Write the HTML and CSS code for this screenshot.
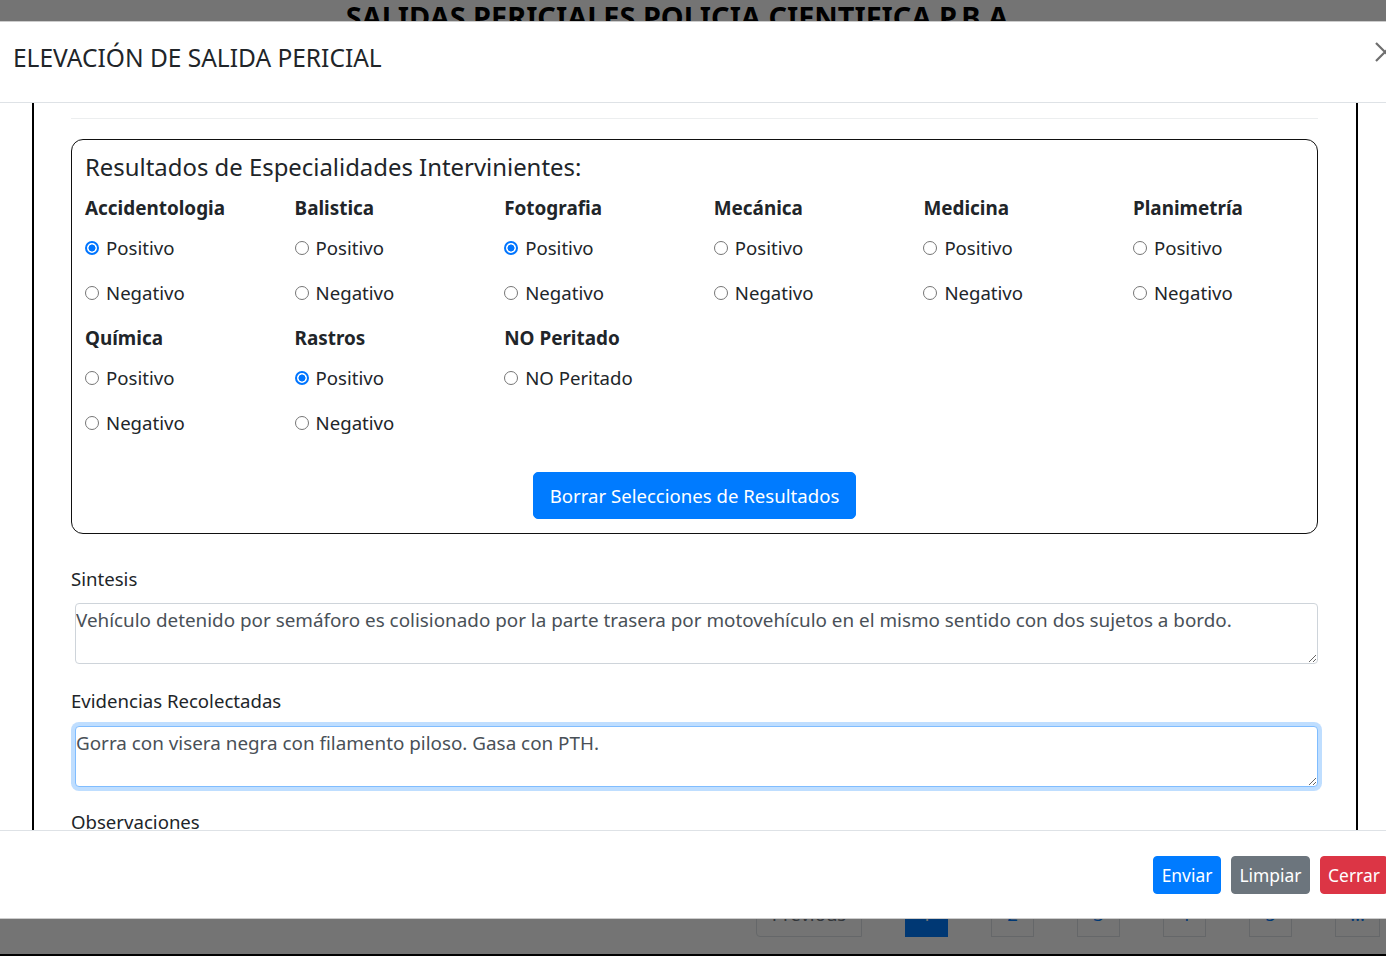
FILE: index.html
```html
<!DOCTYPE html>
<html lang="es">
<head>
<meta charset="utf-8">
<title>Elevación de salida pericial</title>
<link rel="stylesheet" href="styles.css">
</head>
<body>
<div class="page">
  <h1 class="site-title">SALIDAS PERICIALES POLICIA CIENTIFICA P.B.A</h1>
  <div class="page-spacer"></div>
  <nav class="pager">
    <span class="pg pg-prev">Previous</span>
    <span class="pg pg-active">1</span>
    <span class="pg">2</span>
    <span class="pg">3</span>
    <span class="pg">4</span>
    <span class="pg">5</span>
    <span class="pg pg-more">…</span>
  </nav>
  <div class="page-edge"></div>
</div>
<div class="backdrop"></div>
<div class="modal">
  <div class="modal-header">
    <h5 class="modal-title">ELEVACIÓN DE SALIDA PERICIAL</h5>
    <button class="close" type="button" aria-label="Close">
      <svg width="20" height="20" viewBox="0 0 20 20"><path d="M1 1 L19 19 M19 1 L1 19" stroke="#6e6e6e" stroke-width="2.2" fill="none"/></svg>
    </button>
  </div>
  <div class="modal-body">
    <div class="frame">
      <hr class="sep">
      <fieldset class="results">
        <h4 class="results-title">Resultados de Especialidades Intervinientes:</h4>
        <div class="spec-grid">
          <div class="spec">
            <div class="spec-name">Accidentologia</div>
            <label class="opt"><input type="radio" name="acc" checked>Positivo</label>
            <label class="opt"><input type="radio" name="acc">Negativo</label>
          </div>
          <div class="spec">
            <div class="spec-name">Balistica</div>
            <label class="opt"><input type="radio" name="bal">Positivo</label>
            <label class="opt"><input type="radio" name="bal">Negativo</label>
          </div>
          <div class="spec">
            <div class="spec-name">Fotografia</div>
            <label class="opt"><input type="radio" name="fot" checked>Positivo</label>
            <label class="opt"><input type="radio" name="fot">Negativo</label>
          </div>
          <div class="spec">
            <div class="spec-name">Mecánica</div>
            <label class="opt"><input type="radio" name="mec">Positivo</label>
            <label class="opt"><input type="radio" name="mec">Negativo</label>
          </div>
          <div class="spec">
            <div class="spec-name">Medicina</div>
            <label class="opt"><input type="radio" name="med">Positivo</label>
            <label class="opt"><input type="radio" name="med">Negativo</label>
          </div>
          <div class="spec">
            <div class="spec-name">Planimetría</div>
            <label class="opt"><input type="radio" name="pla">Positivo</label>
            <label class="opt"><input type="radio" name="pla">Negativo</label>
          </div>
          <div class="spec">
            <div class="spec-name">Química</div>
            <label class="opt"><input type="radio" name="qui">Positivo</label>
            <label class="opt"><input type="radio" name="qui">Negativo</label>
          </div>
          <div class="spec">
            <div class="spec-name">Rastros</div>
            <label class="opt"><input type="radio" name="ras" checked>Positivo</label>
            <label class="opt"><input type="radio" name="ras">Negativo</label>
          </div>
          <div class="spec">
            <div class="spec-name">NO Peritado</div>
            <label class="opt"><input type="radio" name="nop">NO Peritado</label>
          </div>
        </div>
        <div class="results-actions">
          <button class="btn btn-primary btn-clear" type="button">Borrar Selecciones de Resultados</button>
        </div>
      </fieldset>
      <div class="field field-first">
        <label class="field-label">Sintesis</label>
        <textarea class="field-input">Vehículo detenido por semáforo es colisionado por la parte trasera por motovehículo en el mismo sentido con dos sujetos a bordo.</textarea>
      </div>
      <div class="field">
        <label class="field-label">Evidencias Recolectadas</label>
        <textarea class="field-input is-focused">Gorra con visera negra con filamento piloso. Gasa con PTH.</textarea>
      </div>
      <div class="field">
        <label class="field-label">Observaciones</label>
        <textarea class="field-input"></textarea>
      </div>
    </div>
  </div>
  <div class="modal-footer">
    <button class="fbtn fbtn-primary" type="button">Enviar</button>
    <button class="fbtn fbtn-secondary" type="button">Limpiar</button>
    <button class="fbtn fbtn-danger" type="button">Cerrar</button>
  </div>
</div>
</body>
</html>
```
FILE: styles.css
```css
* { box-sizing: border-box; }
html, body { margin: 0; padding: 0; }
body {
  width: 1386px;
  height: 956px;
  overflow: hidden;
  position: relative;
  background: #fff;
  color: #212529;
  font-family: "Noto Sans", "Open Sans", sans-serif;
  font-size: 18.6px;
}

/* page behind the backdrop */
.page {
  height: 956px;
  display: flex;
  flex-direction: column;
}
.site-title {
  margin: -1px 0 0;
  padding-right: 32px;
  text-align: center;
  font-size: 28.9px;
  line-height: 36px;
  font-weight: 700;
  color: #000;
  font-stretch: 88%;
}
.page-spacer { flex: 1; }
.pager {
  display: flex;
  justify-content: flex-end;
  gap: 43px;
  padding-right: 6px;
  margin-bottom: 17px;
}
.pg {
  height: 47px;
  width: 43px;
  border: 1px solid #dee2e6;
  color: #007bff;
  display: flex;
  align-items: center;
  justify-content: center;
  font-size: 18.6px;
}
.pg-prev { width: 106px; color: #6c757d; border-radius: 4px 0 0 4px; }
.pg-active { background: #007bff; border-color: #007bff; color: #fff; }
.pg-more { width: 45px; }
.page-edge { height: 2px; background: #000; }

.backdrop {
  position: fixed;
  inset: 0;
  background: rgba(0, 0, 0, 0.545);
}

/* modal */
.modal {
  position: absolute;
  top: 21px;
  left: -1px;
  width: 1405px;
  height: 898px;
  background: #fff;
  border: 1px solid rgba(0, 0, 0, 0.2);
  display: flex;
  flex-direction: column;
}
.modal-header {
  height: 81px;
  flex: none;
  border-bottom: 1px solid #dee2e6;
  display: flex;
  align-items: flex-start;
  padding: 0 8px 0 13px;
}
.modal-title {
  margin: 19px 0 0;
  font-size: 24.5px;
  line-height: 34px;
  font-weight: 400;
  color: #212529;
  font-stretch: 92%;
}
.close {
  margin: 20px 0 0 auto;
  padding: 0;
  border: 0;
  background: none;
  width: 20px;
  height: 20px;
  display: block;
}
.close svg { display: block; }

.modal-body {
  flex: none;
  height: 727px;
  overflow: hidden;
  padding-left: 32px;
}
.frame {
  width: 1326px;
  min-height: 100%;
  border-left: 2px solid #000;
  border-right: 2px solid #000;
  padding: 15px 38px 0 37px;
}
.sep {
  margin: 0 0 20px;
  border: 0;
  border-top: 1px solid #eceeef;
  height: 0;
}

.results {
  margin: 0;
  min-width: 0;
  height: 395px;
  border: 1px solid #111;
  border-radius: 12px;
  padding: 9px 13px 0 13px;
}
.results-title {
  margin: 0 0 8px;
  font-size: 23.9px;
  line-height: 36px;
  font-weight: 400;
}
.spec-grid {
  display: grid;
  grid-template-columns: repeat(6, 209.6px);
  margin-right: -40px;
}
.spec {
  height: 130px;
  display: flex;
  flex-direction: column;
}
.spec-name {
  height: 40px;
  line-height: 30px;
  font-weight: 700;
  font-size: 18.9px;
}
.opt {
  height: 45px;
  line-height: 30px;
  display: block;
  white-space: nowrap;
}
.opt input {
  -webkit-appearance: none;
  appearance: none;
  width: 14px;
  height: 14px;
  margin: 0 7px 0 0;
  vertical-align: 0;
  border: 1px solid #767676;
  border-radius: 50%;
  background: #fff;
}
.opt input:checked {
  border: 2px solid #0075ff;
  background: radial-gradient(circle at center, #0075ff 0 3.2px, #fff 3.8px);
}
.results-actions {
  display: flex;
  justify-content: center;
  margin-top: 19px;
}
.btn {
  font-family: inherit;
  font-size: 18.6px;
  line-height: 30px;
  height: 47px;
  padding: 0 16px;
  border: 1px solid transparent;
  border-radius: 5px;
  cursor: pointer;
}
.btn-primary { background: #007bff; border-color: #007bff; color: #fff; }

.field { margin-bottom: 20px; }
.field-first { margin-top: 30px; margin-bottom: 22px; }
.field-label {
  display: block;
  line-height: 30px;
  margin-bottom: 10px;
}
.field-first .field-label { margin-bottom: 9px; }
.field-input {
  display: block;
  margin-left: 4px;
  width: 1243px;
  height: 61px;
  padding: 1px 0 0 0;
  font-family: inherit;
  font-size: 18.85px;
  line-height: 30px;
  color: #495057;
  border: 1px solid #ced4da;
  border-radius: 4px;
  resize: vertical;
  outline: none;
}
.field-input.is-focused {
  border-color: #80bdff;
  box-shadow: 0 0 0 4px rgba(0, 123, 255, 0.25);
}

.modal-footer {
  flex: 1;
  border-top: 1px solid #dee2e6;
  display: flex;
  align-items: center;
  justify-content: flex-end;
  gap: 10px;
  padding-right: 15px;
}
.fbtn {
  height: 38px;
  padding: 0;
  border: 1px solid transparent;
  border-radius: 4px;
  color: #fff;
  font-family: inherit;
  font-size: 17.4px;
  font-stretch: 87%;
  cursor: pointer;
}
.fbtn-primary { width: 68px; background: #007bff; border-color: #007bff; }
.fbtn-secondary { width: 79px; background: #6c757d; border-color: #6c757d; }
.fbtn-danger { width: 68px; background: #dc3545; border-color: #dc3545; }
```
